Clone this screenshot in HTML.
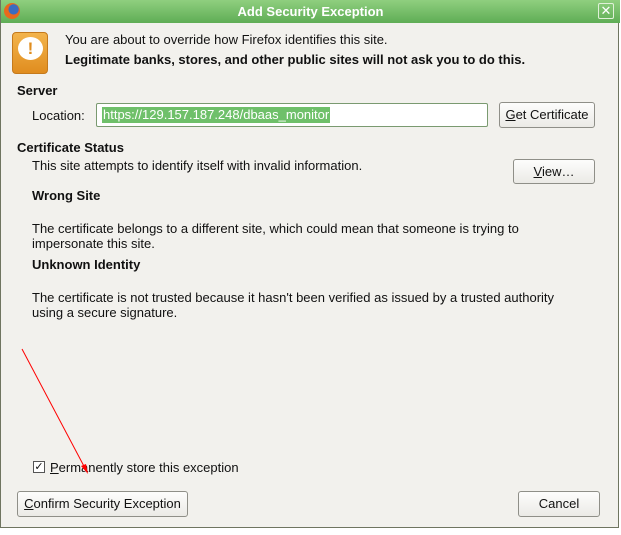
<!DOCTYPE html><html><head><style>
*{margin:0;padding:0;box-sizing:border-box}
body{width:621px;height:535px;background:#fff;position:relative;overflow:hidden;font-family:"Liberation Sans",sans-serif;font-size:13px;color:#111}
.win{position:absolute;left:0;top:0;width:619px;height:528px;background:#f2f1ed;border:1px solid #6f7560;border-top:none}
.title{position:absolute;left:0;top:0;width:619px;height:23px;background:linear-gradient(#8fcf7f,#5fad55);color:#fff;font-weight:bold;font-size:13px;text-align:center;line-height:23px}
.a{position:absolute;white-space:nowrap}
.btn{position:absolute;border:1px solid #8f8f88;border-radius:3px;background:linear-gradient(#fdfdfc,#ebeae6);text-align:center;font-size:13px}
b{font-weight:bold}
</style></head><body>
<div class="win">
<div class="title">Add Security Exception</div>
<div class="a" style="left:3px;top:3px;width:16px;height:16px;border-radius:50%;background:radial-gradient(circle at 60% 40%,#3a6cc0 35%,#e8691c 40%)"></div>
<div class="a" style="left:597px;top:3px;width:16px;height:16px;border:1px solid #e0f0d8;border-radius:2px;color:#fff;font-size:13px;line-height:13px;text-align:center">✕</div>
<div class="a" style="left:11px;top:32px;width:36px;height:42px;border-radius:4px;background:linear-gradient(#f3b44c,#e08d1f);border:1px solid #c57a1c"></div>
<div class="a" style="left:17px;top:37px;width:25px;height:23px;border-radius:50%;background:#fff;color:#e08d1f;font-weight:bold;font-size:17px;text-align:center;line-height:23px">!</div>
<div class="a" style="left:64px;top:32px">You are about to override how Firefox identifies this site.</div>
<div class="a" style="left:64px;top:52px"><b>Legitimate banks, stores, and other public sites will not ask you to do this.</b></div>
<div class="a" style="left:16px;top:83px"><b>Server</b></div>
<div class="a" style="left:31px;top:108px">Location:</div>
<div class="a" style="left:95px;top:103px;width:392px;height:24px;background:#fff;border:1px solid #7a9a70;border-radius:2px"></div>
<div class="a" style="left:101px;top:107px;background:#6fc06a;color:#fff;padding:0 1px;line-height:16px">https://129.157.187.248/dbaas_monitor</div>
<div class="btn" style="left:498px;top:102px;width:96px;height:26px;line-height:24px"><u>G</u>et Certificate</div>
<div class="a" style="left:16px;top:140px"><b>Certificate Status</b></div>
<div class="a" style="left:31px;top:158px">This site attempts to identify itself with invalid information.</div>
<div class="btn" style="left:512px;top:159px;width:82px;height:25px;line-height:23px"><u>V</u>iew…</div>
<div class="a" style="left:31px;top:188px"><b>Wrong Site</b></div>
<div class="a" style="left:31px;top:221px">The certificate belongs to a different site, which could mean that someone is trying to</div>
<div class="a" style="left:31px;top:236px">impersonate this site.</div>
<div class="a" style="left:31px;top:257px"><b>Unknown Identity</b></div>
<div class="a" style="left:31px;top:290px">The certificate is not trusted because it hasn't been verified as issued by a trusted authority</div>
<div class="a" style="left:31px;top:305px">using a secure signature.</div>
<div class="a" style="left:32px;top:461px;width:12px;height:12px;border:1px solid #555;background:#fff;font-size:11px;line-height:10px;text-align:center">✓</div>
<div class="a" style="left:49px;top:460px"><u>P</u>ermanently store this exception</div>
<div class="btn" style="left:16px;top:491px;width:171px;height:26px;line-height:24px"><u>C</u>onfirm Security Exception</div>
<div class="btn" style="left:517px;top:491px;width:82px;height:26px;line-height:24px">Cancel</div>
</div>
<svg class="a" style="left:0;top:0" width="621" height="535"><line x1="22" y1="349" x2="86" y2="470" stroke="#f00" stroke-width="1"/><polygon points="88,474 81,466 86,464" fill="#f00"/></svg>
</body></html>
